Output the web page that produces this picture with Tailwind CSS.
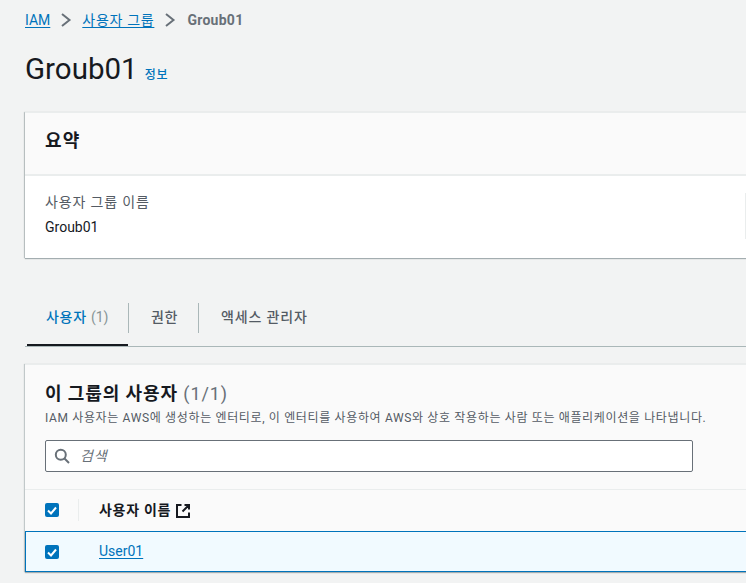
<!DOCTYPE html>
<html lang="ko"><head><meta charset="utf-8"><script src="https://cdn.jsdelivr.net/npm/@tailwindcss/browser@4"></script></head>
<body class="bg-[#f2f3f3] overflow-hidden font-['Roboto','Noto_Sans_CJK_KR',sans-serif] text-[#16191f]">
<div class="w-[746px] h-[583px] overflow-hidden pl-[25px]">
  <nav class="h-[40px] flex items-center text-[14px] leading-[20px]">
    <a class="text-[#0073bb] underline underline-offset-2">IAM</a>
    <svg class="w-[12px] h-[14px] mx-[10px]" viewBox="0 0 12 14" fill="none" stroke="#687078" stroke-width="2"><path d="M2 1 9.500 7 2 13"/></svg>
    <a class="text-[#0073bb] underline underline-offset-2 tracking-[0.05em]">사용자 그룹</a>
    <svg class="w-[12px] h-[14px] mx-[10px]" viewBox="0 0 12 14" fill="none" stroke="#687078" stroke-width="2"><path d="M2 1 9.500 7 2 13"/></svg>
    <span class="text-[#687078] font-bold text-[14px] ml-[1px] tracking-[0.02em]">Groub01</span>
  </nav>
  <div class="h-[72px] flex items-start pt-[10px]">
    <h1 class="text-[29.500px] leading-[38px] font-normal">Groub01</h1>
    <a class="text-[#0073bb] text-[12px] font-medium tracking-[0.06em] ml-[7px] mt-[17px] leading-[16px]">정보</a>
  </div>
  <section class="relative bg-white w-[760px] h-[146px] border-t border-[#eaeded] shadow-[0_1px_1px_0_rgba(0,28,36,0.3),-1px_0_1px_0_rgba(0,28,36,0.2)]">
    <div class="h-[63px] bg-[#fafafa] border-b-2 border-[#eaeded] pl-[20px] flex items-center"><h2 class="text-[18px] font-bold leading-[24px] pb-[6px] tracking-[0.06em]">요약</h2></div>
    <div class="pl-[20px] pt-[16px]">
      <div class="text-[14px] leading-[20px] text-[#545b64] tracking-[0.06em]">사용자 그룹 이름</div>
      <div class="text-[14px] leading-[20px] mt-[5px]">Groub01</div>
    </div>
    <div class="absolute left-[720px] top-[80px] w-px h-[46px] bg-[#eaeded]"></div>
  </section>
  <div class="mt-[42px] h-[47px] w-[760px] border-b border-[#aab7b8] flex items-start text-[14px]">
    <div class="relative w-[104px] h-[46px] pl-[21px] pt-[7px] leading-[20px] font-medium text-[#0073bb] tracking-[0.05em]">사용자 <span class="font-normal text-[#879596] tracking-normal">(1)</span>
      <div class="absolute left-[2px] right-[1px] bottom-0 h-[2px] bg-[#16191f]"></div>
      <div class="absolute right-0 top-[3px] w-px h-[30px] bg-[#aab7b8]"></div>
    </div>
    <div class="relative w-[70px] h-[46px] pl-[22px] pt-[7px] leading-[20px] font-medium text-[#545b64] tracking-[0.05em]">권한
      <div class="absolute right-0 top-[3px] w-px h-[30px] bg-[#aab7b8]"></div>
    </div>
    <div class="pl-[22px] pt-[7px] leading-[20px] font-medium text-[#545b64] tracking-[0.06em]">액세스 관리자</div>
  </div>
  <section class="mt-[17px] bg-[#fafafa] w-[760px] h-[208px] border-t border-[#eaeded] shadow-[-1px_0_1px_0_rgba(0,28,36,0.2)]">
    <div class="pl-[20px] pt-[17px]">
      <h2 class="text-[18px] leading-[24px] font-bold tracking-[0.05em]">이 그룹의 사용자 <span class="font-normal text-[#687078]">(1/1)</span></h2>
      <p class="text-[12px] leading-[16px] text-[#545b64] mt-[4px] whitespace-nowrap tracking-[0.054em]">IAM 사용자는 AWS에 생성하는 엔터티로, 이 엔터티를 사용하여 AWS와 상호 작용하는 사람 또는 애플리케이션을 나타냅니다.</p>
      <div class="mt-[14px] w-[648px] h-[32px] bg-white border border-[#687078] rounded-[2px] flex items-center pl-[8px]">
        <svg class="w-[16px] h-[16px]" viewBox="0 0 16 16" fill="none" stroke="#687078" stroke-width="2"><circle cx="6.800" cy="6.800" r="5"/><path d="m10.500 10.500 4.500 4.500"/></svg>
        <span class="ml-[10px] italic text-[14px] text-[#687078] tracking-[0.06em]">검색</span>
      </div>
    </div>
    <div class="mt-[17px] h-[43px] pb-[2px] border-t border-[#eaeded] flex items-center pl-[20px]">
      <span class="w-[14px] h-[14px] bg-[#0073bb] rounded-[2px] flex items-center justify-center"><svg class="w-[14px] h-[14px]" viewBox="0 0 14 14" fill="none" stroke="#fff" stroke-width="2"><path d="m3 7.500 3 3 5-6"/></svg></span>
      <span class="w-px h-[22px] bg-[#eaeded] ml-[19px]"></span>
      <span class="ml-[20px] text-[14px] font-bold tracking-[0.05em]">사용자 이름</span>
      <svg class="w-[16px] h-[16px] ml-[4px] mt-[1px]" viewBox="0 0 16 16" fill="none" stroke="#16191f" stroke-width="2"><path d="M6.500 2H2v12h12V9.500M9.500 2H14v4.500M14 2 7.500 8.500"/></svg>
    </div>
    <div class="h-[41px] bg-[#f1faff] border border-[#0073bb] border-r-0 -mt-px flex items-center pl-[19px] shadow-[0_1px_1px_0_rgba(0,28,36,0.3)]">
      <span class="w-[14px] h-[14px] bg-[#0073bb] rounded-[2px] flex items-center justify-center"><svg class="w-[14px] h-[14px]" viewBox="0 0 14 14" fill="none" stroke="#fff" stroke-width="2"><path d="m3 7.500 3 3 5-6"/></svg></span>
      <a class="ml-[40px] text-[14px] text-[#0073bb] underline underline-offset-2">User01</a>
    </div>
  </section>
</div>
</body></html>
